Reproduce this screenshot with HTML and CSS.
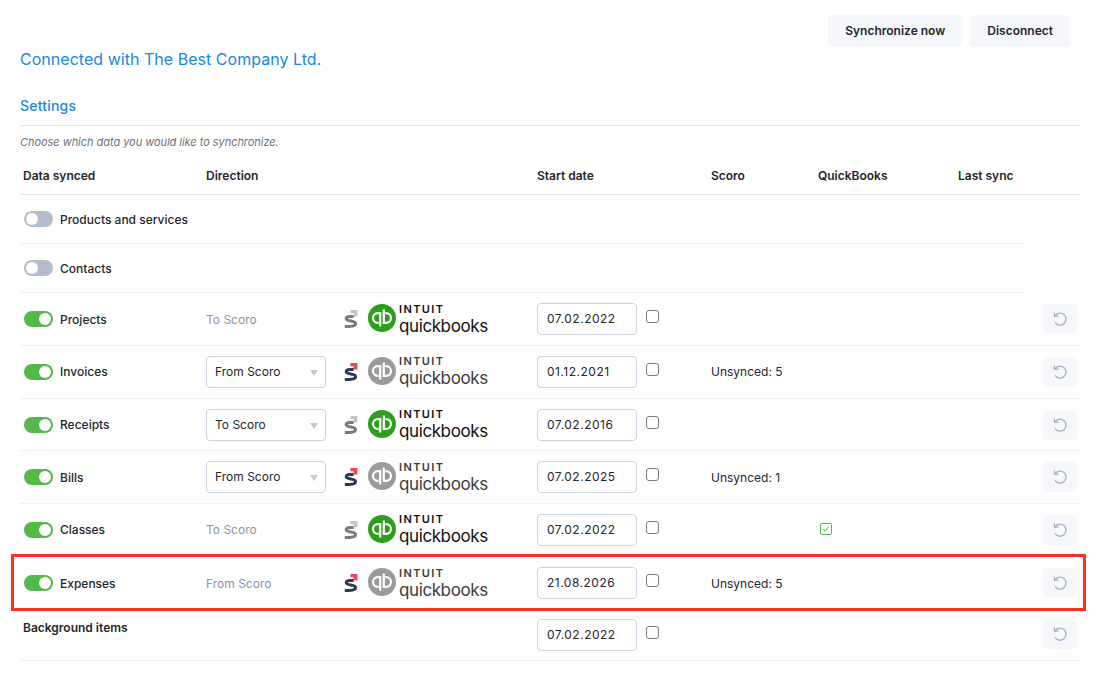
FILE: index.html
```html
<!DOCTYPE html>
<html lang="en">
<head>
    <meta charset="UTF-8">
    <meta name="viewport" content="width=device-width, initial-scale=1.0">
    <title>QuickBooks integration settings</title>
    <link rel="stylesheet" href="styles.css">
</head>
<body>
    <svg class="defs" width="0" height="0" aria-hidden="true">
        <symbol id="scoro-mark" viewBox="0 0 14 18">
            <path class="mark-corner" d="M6.4 0H13.4V6.4H9.6V3.2H6.4Z"/>
            <path class="mark-s" d="M9.6 6.4 H6 C3.6 6.4 2.2 7.2 2.2 8.7 C2.2 11.6 11.6 10.4 11.6 13.5 C11.6 15.6 8.4 16.4 5.4 16.4 H0.8"/>
        </symbol>
        <symbol id="qb-mark" viewBox="0 0 28 28">
            <circle class="qb-disc" cx="14" cy="14" r="14"/>
            <path class="qb-letters" d="M12.2 22.4 V9.2 H9.8 a4.8 4.8 0 0 0 0 9.6 H10.6 M15.8 5.6 V18.8 H18.2 a4.8 4.8 0 0 0 0 -9.6 H17.4"/>
        </symbol>
        <symbol id="undo" viewBox="0 0 16 16">
            <path d="M3.2 4.6 A6 6 0 1 1 3 11.4 M2.4 1.4 V5.2 H6.4" fill="none" stroke="currentColor" stroke-width="1.2"/>
        </symbol>
    </svg>

    <main class="page">
        <div class="top-actions">
            <button class="btn">Synchronize now</button>
            <button class="btn">Disconnect</button>
        </div>
        <h1 class="connected">Connected with The Best Company Ltd.</h1>
        <h2 class="settings-title">Settings</h2>
        <p class="hint">Choose which data you would like to synchronize.</p>

        <div class="row head">
            <div class="pad">Data synced</div>
            <div>Direction</div>
            <div></div>
            <div>Start date</div>
            <div>Scoro</div>
            <div>QuickBooks</div>
            <div>Last sync</div>
            <div></div>
        </div>

        <div class="row short">
            <div class="name"><span class="toggle"></span>Products and services</div>
        </div>
        <div class="row short">
            <div class="name"><span class="toggle"></span>Contacts</div>
        </div>

        <div class="row first">
            <div class="name"><span class="toggle on"></span>Projects</div>
            <div class="dir-text">To Scoro</div>
            <div class="logos to-scoro">
                <svg class="scoro"><use href="#scoro-mark"/></svg>
                <svg class="qb"><use href="#qb-mark"/></svg>
                <div class="qb-words"><span class="intuit">INTUIT</span><span class="qbooks">quickbooks</span></div>
            </div>
            <div class="date-cell"><span class="date">07.02.2022</span><input type="checkbox" class="check"></div>
            <div></div>
            <div></div>
            <div></div>
            <div><button class="undo"><svg><use href="#undo"/></svg></button></div>
        </div>

        <div class="row">
            <div class="name"><span class="toggle on"></span>Invoices</div>
            <div><span class="select">From Scoro</span></div>
            <div class="logos from-scoro">
                <svg class="scoro"><use href="#scoro-mark"/></svg>
                <svg class="qb"><use href="#qb-mark"/></svg>
                <div class="qb-words"><span class="intuit">INTUIT</span><span class="qbooks">quickbooks</span></div>
            </div>
            <div class="date-cell"><span class="date">01.12.2021</span><input type="checkbox" class="check"></div>
            <div>Unsynced: 5</div>
            <div></div>
            <div></div>
            <div><button class="undo"><svg><use href="#undo"/></svg></button></div>
        </div>

        <div class="row">
            <div class="name"><span class="toggle on"></span>Receipts</div>
            <div><span class="select">To Scoro</span></div>
            <div class="logos to-scoro">
                <svg class="scoro"><use href="#scoro-mark"/></svg>
                <svg class="qb"><use href="#qb-mark"/></svg>
                <div class="qb-words"><span class="intuit">INTUIT</span><span class="qbooks">quickbooks</span></div>
            </div>
            <div class="date-cell"><span class="date">07.02.2016</span><input type="checkbox" class="check"></div>
            <div></div>
            <div></div>
            <div></div>
            <div><button class="undo"><svg><use href="#undo"/></svg></button></div>
        </div>

        <div class="row">
            <div class="name"><span class="toggle on"></span>Bills</div>
            <div><span class="select">From Scoro</span></div>
            <div class="logos from-scoro">
                <svg class="scoro"><use href="#scoro-mark"/></svg>
                <svg class="qb"><use href="#qb-mark"/></svg>
                <div class="qb-words"><span class="intuit">INTUIT</span><span class="qbooks">quickbooks</span></div>
            </div>
            <div class="date-cell"><span class="date">07.02.2025</span><input type="checkbox" class="check"></div>
            <div>Unsynced: 1</div>
            <div></div>
            <div></div>
            <div><button class="undo"><svg><use href="#undo"/></svg></button></div>
        </div>

        <div class="row">
            <div class="name"><span class="toggle on"></span>Classes</div>
            <div class="dir-text">To Scoro</div>
            <div class="logos to-scoro">
                <svg class="scoro"><use href="#scoro-mark"/></svg>
                <svg class="qb"><use href="#qb-mark"/></svg>
                <div class="qb-words"><span class="intuit">INTUIT</span><span class="qbooks">quickbooks</span></div>
            </div>
            <div class="date-cell"><span class="date">07.02.2022</span><input type="checkbox" class="check"></div>
            <div></div>
            <div>
                <svg class="synced" viewBox="0 0 12 12">
                    <rect x="0.5" y="0.5" width="11" height="11" rx="1.5"/>
                    <path d="M3.6 6.2 5.2 8.2 8.4 3.8"/>
                </svg>
            </div>
            <div></div>
            <div><button class="undo"><svg><use href="#undo"/></svg></button></div>
        </div>

        <div class="row no-line">
            <div class="name"><span class="toggle on"></span>Expenses</div>
            <div class="dir-text">From Scoro</div>
            <div class="logos from-scoro">
                <svg class="scoro"><use href="#scoro-mark"/></svg>
                <svg class="qb"><use href="#qb-mark"/></svg>
                <div class="qb-words"><span class="intuit">INTUIT</span><span class="qbooks">quickbooks</span></div>
            </div>
            <div class="date-cell"><span class="date">21.08.2026</span><input type="checkbox" class="check"></div>
            <div>Unsynced: 5</div>
            <div></div>
            <div></div>
            <div><button class="undo"><svg><use href="#undo"/></svg></button></div>
        </div>

        <div class="row last">
            <div class="pad bold">Background items</div>
            <div></div>
            <div></div>
            <div class="date-cell"><span class="date">07.02.2022</span><input type="checkbox" class="check"></div>
            <div></div>
            <div></div>
            <div></div>
            <div><button class="undo"><svg><use href="#undo"/></svg></button></div>
        </div>

        <div class="highlight"></div>
    </main>
</body>
</html>
```

FILE: styles.css
```css
body {
    margin: 0;
    background-color: #fff;
    color: #24262b;
    font-family: Inter, "Liberation Sans", sans-serif;
    font-size: 12px;
}
.defs {
    position: absolute;
}
.page {
    position: relative;
    width: 1080px;
    height: 675px;
    padding: 15px 0 0 20px;
    box-sizing: border-box;
}
.top-actions {
    display: flex;
    justify-content: flex-end;
    gap: 8px;
    height: 32px;
    padding-right: 10px;
}
.btn {
    height: 32px;
    padding: 0 17px 2px;
    border: none;
    border-radius: 4px;
    background-color: #f6f7fb;
    color: #24262b;
    font-family: inherit;
    font-size: 12px;
    font-weight: 600;
}
.connected {
    margin: 0;
    color: #1c86e0;
    font-size: 16px;
    font-weight: 400;
    line-height: 24px;
    letter-spacing: 0.03px;
}
.settings-title {
    margin: 25px 0 0;
    height: 30px;
    color: #1c86e0;
    font-size: 14px;
    font-weight: 500;
    line-height: 20px;
    letter-spacing: 0.2px;
    border-bottom: 1px solid #e1e4ec;
    box-sizing: border-box;
}
.hint {
    margin: 9px 0 0;
    color: #6b7280;
    font-size: 11px;
    font-style: italic;
    line-height: 14px;
    letter-spacing: -0.04px;
}
.row {
    display: grid;
    grid-template-columns: 186px 136px 195px 174px 107px 140px 85px 37px;
    align-items: center;
    height: 52.67px;
    border-bottom: 1px solid #f0f1f6;
    box-sizing: border-box;
    font-weight: 400;
}
.row.head {
    height: 39px;
    margin-top: 7px;
    border-bottom-color: #e1e4ec;
    font-weight: 600;
}
.row.short {
    width: 1004px;
    height: 49px;
}
.row.first {
    margin-top: 0.5px;
}
.row.no-line {
    border-bottom: none;
}
.row.last {
    height: 51.5px;
    align-items: start;
    padding-top: 9.83px;
}
.pad {
    padding-left: 3px;
}
.bold {
    font-weight: 600;
    line-height: 18px;
}
.name {
    display: flex;
    align-items: center;
    gap: 7px;
    padding-left: 4px;
    font-weight: 500;
}
.toggle {
    position: relative;
    width: 29px;
    height: 16px;
    border-radius: 8px;
    background-color: #b5bccb;
}
.toggle::after {
    content: "";
    position: absolute;
    top: 2px;
    left: 2px;
    width: 12px;
    height: 12px;
    border-radius: 50%;
    background-color: #fff;
}
.toggle.on {
    background-color: #54b84a;
}
.toggle.on::after {
    left: 15px;
}
.dir-text {
    color: #8d94a6;
}
.select {
    position: relative;
    display: block;
    width: 120px;
    height: 32px;
    padding-left: 8px;
    border: 1px solid #cdd2e0;
    border-radius: 4px;
    box-sizing: border-box;
    line-height: 30px;
}
.select::after {
    content: "";
    position: absolute;
    top: 13px;
    right: 7px;
    border-top: 6px solid #c3c8d6;
    border-left: 4px solid transparent;
    border-right: 4px solid transparent;
}
.logos {
    display: flex;
    align-items: center;
    height: 32px;
    padding-left: 2px;
    padding-bottom: 2px;
    box-sizing: border-box;
}
.scoro {
    width: 14px;
    height: 18px;
    margin: 2px 10px 0 0;
}
.qb {
    width: 28px;
    height: 28px;
    margin-right: 3px;
}
.qb-words {
    display: flex;
    flex-direction: column;
    padding-top: 2px;
    color: #111;
}
.intuit {
    height: 13px;
    font-size: 11px;
    font-weight: 600;
    line-height: 13px;
    letter-spacing: 1.4px;
}
.qbooks {
    height: 20px;
    font-size: 17px;
    line-height: 20px;
    letter-spacing: -0.4px;
}
.to-scoro {
    --mark-corner: #c4c4c4;
    --mark-s: #7a7a7a;
    --qb-disc: #2ca01c;
}
.from-scoro {
    --mark-corner: #e8465a;
    --mark-s: #2c3a55;
    --qb-disc: #9b9b9b;
}
.mark-corner {
    fill: var(--mark-corner);
}
.mark-s {
    fill: none;
    stroke: var(--mark-s);
    stroke-width: 3;
}
.qb-disc {
    fill: var(--qb-disc);
}
.from-scoro .qb-words {
    color: #3c3c3c;
}
.qb-letters {
    fill: none;
    stroke: #fff;
    stroke-width: 2.2;
}
.date-cell {
    display: flex;
    gap: 9px;
}
.date {
    display: block;
    width: 100px;
    height: 32px;
    padding-left: 9px;
    border: 1px solid #cdd2e0;
    border-radius: 4px;
    box-sizing: border-box;
    line-height: 30px;
    letter-spacing: 0.5px;
}
.check {
    appearance: none;
    width: 13px;
    height: 13px;
    margin: 7px 0 0;
    border: 1px solid #777c88;
    border-radius: 3px;
    background-color: #fff;
}
.synced {
    display: block;
    width: 12px;
    height: 12px;
    margin: -1px 0 0 2px;
    fill: none;
    stroke: #54b84a;
    stroke-width: 1;
}
.undo {
    display: block;
    width: 34px;
    height: 30px;
    padding: 0;
    border: none;
    border-radius: 4px;
    background-color: #f6f7fb;
    color: #a9aebd;
}
.undo svg {
    display: block;
    width: 16px;
    height: 16px;
    margin: 0 auto;
}
.highlight {
    position: absolute;
    left: 11px;
    top: 554px;
    width: 1075px;
    height: 57px;
    border: 3px solid #ff3120;
    box-sizing: border-box;
}
```
